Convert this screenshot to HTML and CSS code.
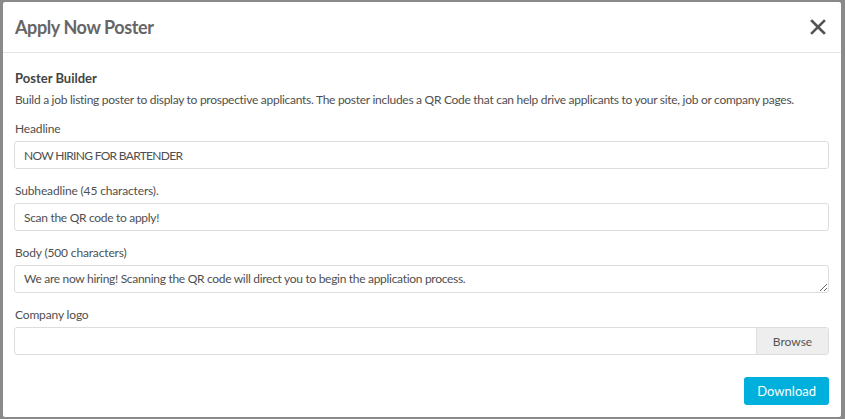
FILE: index.html
```html
<!DOCTYPE html>
<html lang="en">
<head>
    <meta charset="UTF-8">
    <title>Apply Now Poster</title>
    <link rel="stylesheet" href="styles.css">
</head>
<body>
    <div class="modal">
        <div class="modal-header">
            <h2>Apply Now Poster</h2>
            <button class="close" aria-label="Close">
                <svg width="16" height="16" viewBox="0 0 16 16"><path d="M2 2L14 14M14 2L2 14" stroke="#555" stroke-width="2.6" stroke-linecap="square"/></svg>
            </button>
        </div>
        <div class="modal-body">
            <h3>Poster Builder</h3>
            <p class="intro">Build a job listing poster to display to prospective applicants. The poster includes a QR Code that can help drive applicants to your site, job or company pages.</p>

            <div class="field">
                <label for="headline">Headline</label>
                <input type="text" id="headline" value="NOW HIRING FOR BARTENDER">
            </div>
            <div class="field">
                <label for="subheadline">Subheadline (45 characters).</label>
                <input type="text" id="subheadline" value="Scan the QR code to apply!">
            </div>
            <div class="field">
                <label for="body">Body (500 characters)</label>
                <textarea id="body" rows="1">We are now hiring! Scanning the QR code will direct you to begin the application process.</textarea>
            </div>
            <div class="field">
                <label>Company logo</label>
                <div class="file-group">
                    <span class="file-name"></span>
                    <button class="browse">Browse</button>
                </div>
            </div>

            <div class="actions">
                <button class="btn-primary">Download</button>
            </div>
        </div>
    </div>
</body>
</html>
```

FILE: styles.css
```css
body { margin: 0; background: #8a8a8a; font-family: Lato, "Liberation Sans", sans-serif; color: #4f4f4f; }
.modal { margin: 2px 4px 0 3px; width: 838px; height: 415px; background: #fff; border-radius: 2px; box-sizing: border-box; }
.modal-header { height: 50px; border-bottom: 1px solid #e5e5e5; display: flex; align-items: center; justify-content: space-between; padding: 0 15px 0 12px; }
.modal-header h2 { margin: 0; font-size: 18px; font-weight: bold; color: #666; letter-spacing: -0.4px; }
.close { border: none; background: none; padding: 0; cursor: pointer; display: flex; }
.modal-body { padding: 16px 12px 0 11px; }
.modal-body h3 { margin: 0; font-size: 13px; line-height: 18px; font-weight: bold; color: #444; padding-left: 1px; }
.intro { margin: 4px 0 11px; font-size: 12px; line-height: 18px; padding-left: 1px; letter-spacing: -0.28px; white-space: nowrap; }
.field { margin-bottom: 13px; }
.field label { display: block; font-size: 12px; line-height: 18px; margin-bottom: 3px; padding-left: 1px; letter-spacing: -0.15px; }
.field input, .field textarea { display: block; width: 100%; box-sizing: border-box; height: 28px; border: 1px solid #ddd; border-radius: 3px; padding: 0 9px; font-family: inherit; font-size: 12px; color: #4f4f4f; letter-spacing: -0.3px; }
#headline { letter-spacing: -0.7px; }
.field textarea { padding-top: 6px; resize: vertical; overflow: hidden; line-height: 14px; }
.file-group { display: flex; height: 28px; border: 1px solid #ddd; border-radius: 3px; box-sizing: border-box; overflow: hidden; }
.file-name { flex: 1; }
.browse { width: 72px; border: none; border-left: 1px solid #ddd; background: #eee; font-family: inherit; font-size: 12px; color: #555; }
.actions { display: flex; justify-content: flex-end; margin-top: 22px; }
.btn-primary { height: 28px; padding: 0 13px; background: #00b0dc; color: #fff; border: none; border-radius: 3px; font-family: inherit; font-size: 13px; }
```
